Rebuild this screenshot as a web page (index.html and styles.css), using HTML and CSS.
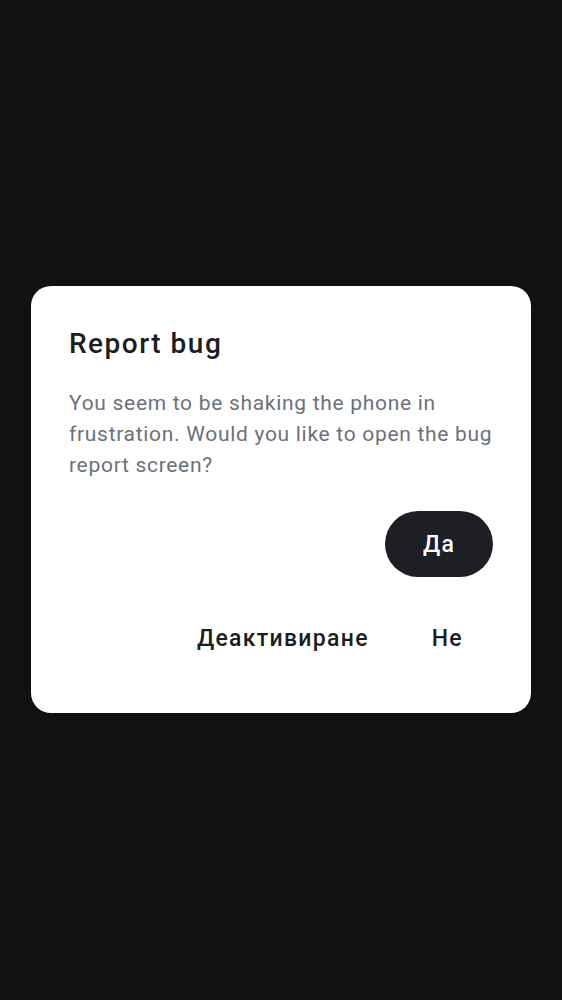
FILE: index.html
```html
<!DOCTYPE html>
<html>
<head>
<meta charset="utf-8">
<link rel="stylesheet" href="styles.css">
</head>
<body>
<div class="screen">
  <div class="dialog">
    <h1 class="title">Report bug</h1>
    <p class="body">You seem to be shaking the phone in frustration. Would you like to open the bug report screen?</p>
    <div class="primary-row">
      <button class="btn-filled">Да</button>
    </div>
    <div class="text-row">
      <button class="btn-text">Деактивиране</button>
      <button class="btn-text">Не</button>
    </div>
  </div>
</div>
</body>
</html>
```
FILE: styles.css
```css
html, body {
  margin: 0;
  padding: 0;
  background: #111111;
}
.screen {
  width: 562px;
  height: 1000px;
  display: flex;
  align-items: flex-start;
  justify-content: center;
  font-family: Roboto, sans-serif;
}
.dialog {
  margin-top: 286px;
  width: 500px;
  box-sizing: border-box;
  background: #ffffff;
  border-radius: 20px;
  padding: 40px 38px 42px 38px;
  display: flex;
  flex-direction: column;
}
.title {
  margin: 0;
  font-size: 28px;
  line-height: 36px;
  font-weight: 500;
  letter-spacing: 1.5px;
  color: #1c1d22;
}
.body {
  margin: 26px 0 0 0;
  font-size: 21px;
  line-height: 31px;
  letter-spacing: 0.7px;
  color: #6b717c;
}
.primary-row {
  display: flex;
  justify-content: flex-end;
  margin-top: 30px;
}
.btn-filled {
  width: 108px;
  height: 66px;
  border: none;
  border-radius: 33px;
  background: #1d1f24;
  color: #ffffff;
  font-family: inherit;
  font-size: 23px;
  font-weight: 500;
  letter-spacing: 1.3px;
  padding: 0;
}
.text-row {
  display: flex;
  justify-content: flex-end;
  margin-top: 28px;
  gap: 3px;
}
.btn-text {
  height: 66px;
  border: none;
  background: transparent;
  color: #1c1d22;
  font-family: inherit;
  font-size: 23px;
  font-weight: 500;
  letter-spacing: 1.3px;
  padding: 0 30px;
}
```
